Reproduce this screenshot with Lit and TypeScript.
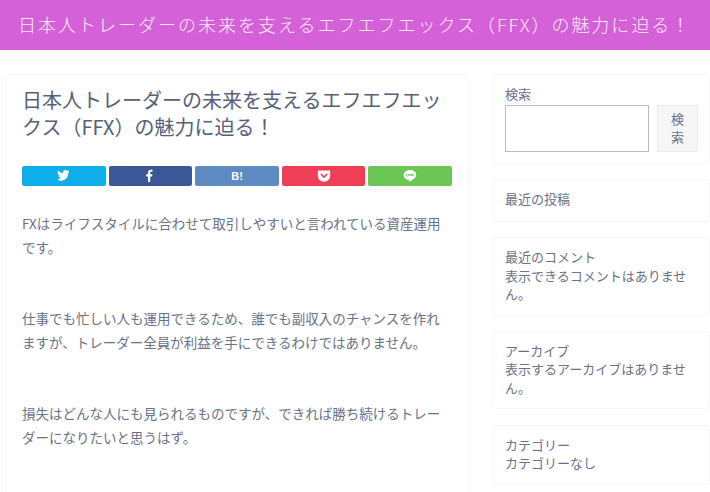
import { LitElement, html, css, svg } from "lit";
import { customElement } from "lit/decorators.js";

const TITLE = "日本人トレーダーの未来を支えるエフエフエックス（FFX）の魅力に迫る！";

const share = [
  { cls: "tw", icon: svg`<path fill="#fff" d="M12 2.6c-.45.2-.9.33-1.4.4.5-.3.9-.8 1.1-1.35-.47.28-1 .48-1.55.6A2.45 2.45 0 0 0 6 4.5C4 4.4 2.2 3.4 1 1.9c-.65 1.1-.33 2.55.75 3.27-.4 0-.77-.12-1.1-.3 0 1.2.83 2.25 1.97 2.48-.36.1-.74.11-1.1.04.3 1 1.23 1.7 2.3 1.72A4.95 4.95 0 0 1 .2 11.1a7 7 0 0 0 10.77-6.2c.4-.3.75-.65 1.03-1.3z" transform="translate(0 -.5)"/>` },
  { cls: "fb", icon: svg`<path fill="#fff" d="M5 13V7.4H3.2V5.2H5V3.6C5 1.7 6.1.7 7.8.7c.8 0 1.5.06 1.7.09v2H8.3c-.9 0-1.1.45-1.1 1.1v1.3h2.2l-.3 2.2H7.2V13z"/>` },
  { cls: "hb", icon: null },
  { cls: "po", icon: svg`<path fill="#fff" d="M1.8 1.5h10.4c.6 0 1 .4 1 1v4.2A6.1 6.1 0 0 1 7 12.8 6.1 6.1 0 0 1 .8 6.7V2.5c0-.6.4-1 1-1z"/><path fill="none" stroke="#ef3f56" stroke-width="1.7" stroke-linecap="round" stroke-linejoin="round" d="M4.3 5.5 7 8.1l2.7-2.6"/>` },
  { cls: "li", icon: svg`<path fill="#fff" d="M7 1C3.4 1 .6 3.2.6 6c0 2.5 2.3 4.6 5.3 4.95.5.1.4.5.3 1.3 0 .3.2.4.5.25 1.7-1 4.3-2.6 5.4-4 .7-.8 1.2-1.6 1.2-2.5C13.4 3.2 10.6 1 7 1z"/><path fill="none" stroke="#6cc655" stroke-width=".8" d="M3.4 4.8V7h1.2M5.6 4.8V7M6.9 7V4.8L8.3 7V4.8M10.7 4.8H9.5V7h1.2M9.5 5.9h1.1"/>` },
];

@customElement("app-root")
export class AppRoot extends LitElement {
  static styles = css`
    :host {
      display: block;
      width: 710px;
      height: 492px;
      overflow: hidden;
      background: #fff;
      color: #6a7287;
      font-family: "Noto Sans CJK JP", "Noto Sans", sans-serif;
      font-size: 13px;
    }
    .site-header {
      height: 50px;
      box-sizing: border-box;
      padding: 0 0 3px 18px;
      background: #d561d8;
      color: #fbe9fb;
      display: flex;
      align-items: center;
      font-size: 18px;
      letter-spacing: 2px;
      white-space: nowrap;
      overflow: hidden;
      font-weight: 300;
    }
    .page {
      display: flex;
      align-items: flex-start;
      gap: 23px;
      padding: 24px 0 0 5px;
    }
    .main {
      width: 464px;
      flex: none;
      box-sizing: border-box;
      height: 440px;
      border: 1px solid #f6f6f8;
      border-radius: 4px;
      padding: 12px 16px;
    }
    h1 {
      margin: 0;
      font-size: 20px;
      line-height: 26.5px;
      font-weight: 400;
      color: #566079;
    }
    .share {
      display: grid;
      grid-template-columns: repeat(5, 1fr);
      gap: 3px;
      margin: 26px 0 0;
    }
    .btn {
      height: 20px;
      border-radius: 2px;
      display: flex;
      align-items: center;
      justify-content: center;
      color: #fff;
      font: bold 11px "Liberation Sans", sans-serif;
    }
    .btn svg { width: 14px; height: 14px; display: block; }
    .tw { background: #0eaeea; }
    .fb { background: #3b5896; }
    .hb { background: #5d8ac0; }
    .po { background: #ef3f56; }
    .li { background: #6cc655; }
    .body { margin-top: 25px; }
    p {
      margin: 0 0 47px;
      font-size: 13.5px;
      line-height: 24px;
    }
    aside {
      flex: none;
      width: 218px;
      display: flex;
      flex-direction: column;
      gap: 15.3px;
    }
    .widget {
      box-sizing: border-box;
      border: 1px solid #f6f6f8;
      border-radius: 4px;
      padding: 10px 12px 11px;
      font-size: 13px;
      line-height: 18.5px;
    }
    .recent { padding-bottom: 12.5px; }
    .search { display: flex; gap: 8px; margin-top: 1px; }
    .input {
      flex: none;
      width: 144px;
      height: 47px;
      box-sizing: border-box;
      border: 1px solid #bcbcbc;
      background: #fff;
    }
    .submit {
      flex: none;
      width: 41px;
      height: 47px;
      box-sizing: border-box;
      border: 1px solid #eaeaea;
      background: #f6f6f6;
      text-align: center;
      display: flex;
      align-items: center;
      justify-content: center;
      padding: 0 12px;
    }
  `;

  render() {
    return html`
      <header class="site-header">${TITLE}</header>
      <div class="page">
        <main class="main">
          <h1>${TITLE}</h1>
          <div class="share">
            ${share.map(
              (s) => html`<div class="btn ${s.cls}">
                ${s.icon ? html`<svg viewBox="0 0 14 14">${s.icon}</svg>` : "B!"}
              </div>`
            )}
          </div>
          <div class="body">
            <p>FXはライフスタイルに合わせて取引しやすいと言われている資産運用です。</p>
            <p>仕事でも忙しい人も運用できるため、誰でも副収入のチャンスを作れますが、トレーダー全員が利益を手にできるわけではありません。</p>
            <p>損失はどんな人にも見られるものですが、できれば勝ち続けるトレーダーになりたいと思うはず。</p>
          </div>
        </main>
        <aside>
          <section class="widget">
            <div>検索</div>
            <div class="search">
              <div class="input"></div>
              <div class="submit">検索</div>
            </div>
          </section>
          <section class="widget recent">最近の投稿</section>
          <section class="widget">最近のコメント<br />表示できるコメントはありません。</section>
          <section class="widget">アーカイブ<br />表示するアーカイブはありません。</section>
          <section class="widget">カテゴリー<br />カテゴリーなし</section>
        </aside>
      </div>
    `;
  }
}
